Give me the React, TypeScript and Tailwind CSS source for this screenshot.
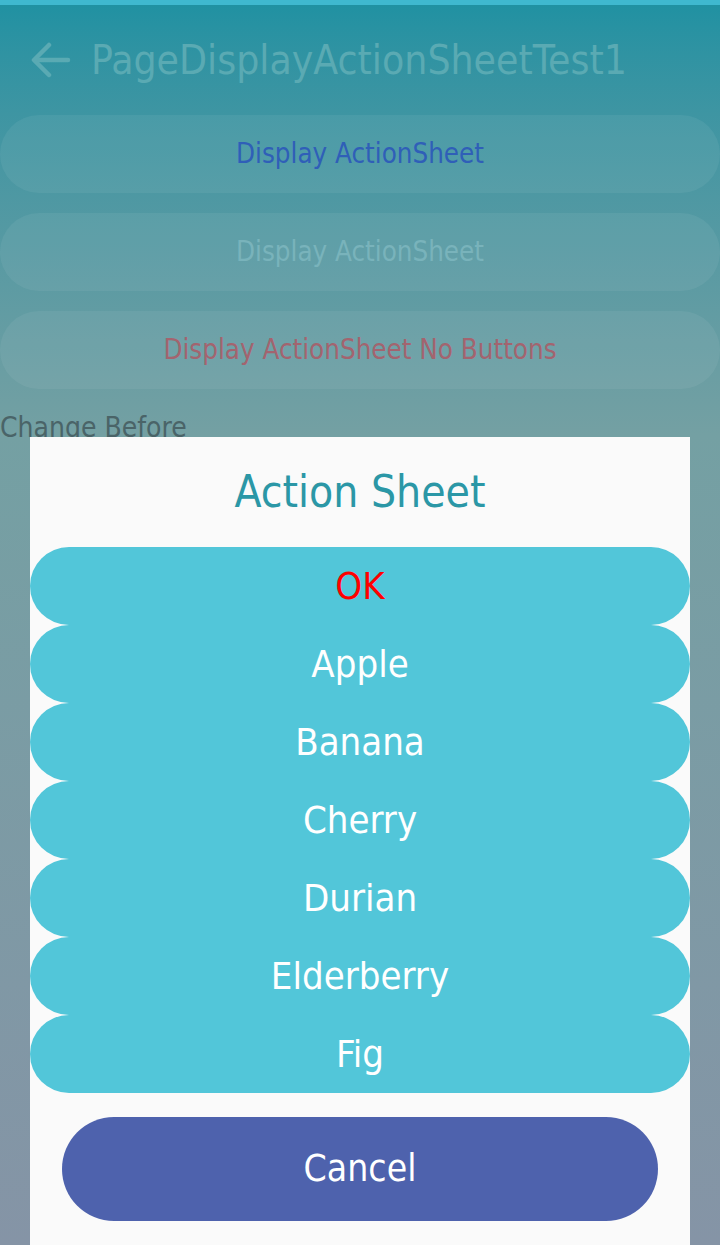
const font = { fontFamily: '"Liberation Sans Narrow", "DejaVu Sans Condensed", Roboto, sans-serif' }

const pageButtons = [
  { label: 'Display ActionSheet', color: 'text-[#2f5fb8]' },
  { label: 'Display ActionSheet', color: 'text-[#79b3bb]' },
  { label: 'Display ActionSheet No Buttons', color: 'text-[#a3646f]' },
]

const items = ['OK', 'Apple', 'Banana', 'Cherry', 'Durian', 'Elderberry', 'Fig']

function BackArrow() {
  return (
    <svg width="40" height="36" viewBox="0 0 40 36" fill="none" stroke="#5aaab3" strokeWidth="4.5" strokeLinecap="round" strokeLinejoin="round">
      <path d="M37 18H4" />
      <path d="M18 3L3 18l15 15" />
    </svg>
  )
}

export default function App() {
  return (
    <div
      className="relative h-[1245px] w-[720px] overflow-hidden bg-gradient-to-b from-[#1e91a2] via-[#74a0a3] via-35% to-[#8594a6]"
      style={font}
    >
      <div className="h-[5px] bg-[#3fb8cf]" />

      {/* Header */}
      <div className="flex h-[110px] items-center gap-[20px] pl-[31px]">
        <BackArrow />
        <h1 className="text-[40.5px] leading-none text-[#5aaab3]">PageDisplayActionSheetTest1</h1>
      </div>

      {/* Page buttons */}
      <div className="flex flex-col gap-[20px]">
        {pageButtons.map((b, i) => (
          <div
            key={i}
            className={`flex h-[78px] items-center justify-center rounded-full bg-white/[0.06] text-[27.5px] ${b.color}`}
          >
            {b.label}
          </div>
        ))}
      </div>

      <div className="mt-[23px] text-[28px] leading-[32px] text-[#4a6468]">Change Before</div>

      {/* Action sheet dialog */}
      <div className="absolute left-[30px] top-[437px] flex h-[830px] w-[660px] flex-col bg-[#fafafa]">
        <div className="flex h-[110px] items-center justify-center text-[44px] text-[#2b97a6]">Action Sheet</div>
        <div className="flex flex-col">
          {items.map((item, i) => (
            <div
              key={item}
              className={`flex h-[78px] items-center justify-center rounded-full bg-[#52c6d9] text-[38px] ${
                i === 0 ? 'text-[#ff0000]' : 'text-white'
              }`}
            >
              {item}
            </div>
          ))}
        </div>
        <div className="mx-[32px] mt-[24px] flex h-[104px] items-center justify-center rounded-full bg-[#4e62ad] text-[37px] text-white">
          Cancel
        </div>
      </div>
    </div>
  )
}
